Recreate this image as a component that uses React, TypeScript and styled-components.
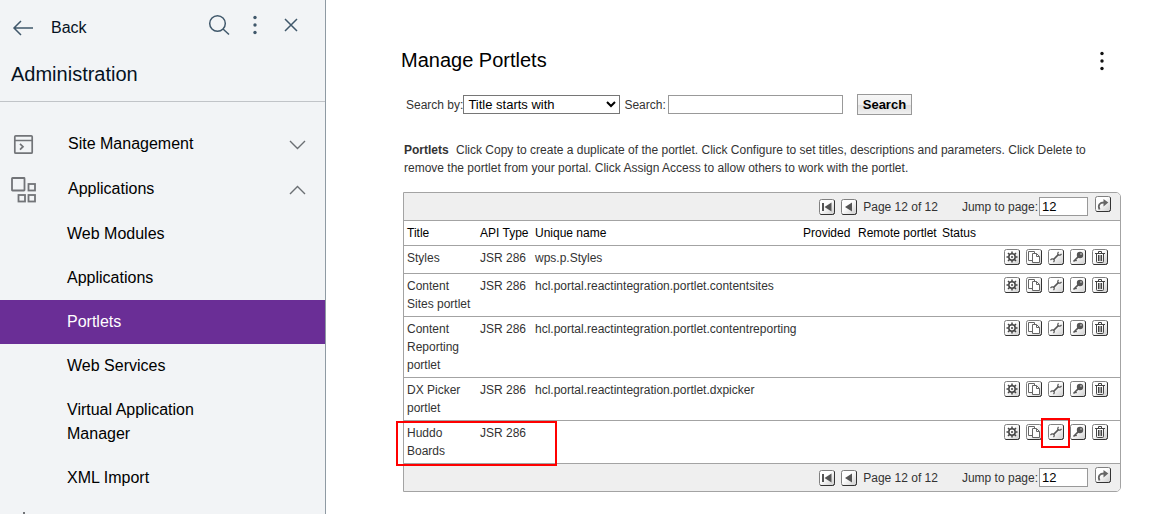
import React from "react";
import styled, { createGlobalStyle, css } from "styled-components";

const GlobalStyle = createGlobalStyle`
  *, *::before, *::after { box-sizing: border-box; }
  body {
    margin: 0;
    background: #fff;
    color: #333;
    font-family: "Liberation Sans", Arial, Helvetica, sans-serif;
    font-size: 12px;
    line-height: 18px;
  }
  button, input, select { font-family: inherit; margin: 0; }
`;

const Page = styled.div`
  display: flex;
  height: 100vh;
  overflow: hidden;
`;

/* ---------- side navigation ---------- */

const Sidebar = styled.aside`
  flex: 0 0 326px;
  background: #f2f4f6;
  border-right: 1px solid #8f9aa3;
  color: #000;
  font-size: 16px;
  line-height: 24px;
  overflow: hidden;
`;

const SidebarHeader = styled.header`
  height: 102px;
  border-bottom: 1px solid #c1c4c8;
`;

const SidebarTools = styled.div`
  display: flex;
  align-items: flex-start;
  padding: 14px 23px 0 12px;
`;

const PlainButton = styled.button`
  display: flex;
  align-items: center;
  padding: 0;
  border: 0;
  background: none;
  color: #40586b;
  cursor: pointer;
`;

const BackButton = styled(PlainButton)`
  gap: 17px;
  height: 28px;
  margin-right: auto;
  font-size: 16px;
`;

const BackLabel = styled.span`
  color: #05121f;
`;

const ToolGroup = styled.div`
  display: flex;
  gap: 14px;
`;

const SidebarTitle = styled.h2`
  margin: 20px 0 0 11px;
  color: #05121f;
  font-size: 20px;
  font-weight: 400;
  line-height: 24px;
`;

const Nav = styled.nav`
  padding-top: 20px;
`;

const NavList = styled.ul`
  margin: 0;
  padding: 0;
  list-style: none;
`;

const SectionButton = styled.button`
  display: flex;
  align-items: center;
  width: 100%;
  height: 45px;
  padding: 0 19px 2px 10px;
  border: 0;
  background: none;
  color: #000;
  font-size: 16px;
  line-height: 24px;
  text-align: left;
  cursor: pointer;
`;

const SectionIcon = styled.span`
  display: flex;
  width: 58px;
  padding-top: 2px;
  color: #727478;
`;

const SectionLabel = styled.span`
  flex: 1;
`;

const NavLink = styled.a<{ $active?: boolean }>`
  display: block;
  padding: 10px 100px 10px 67px;
  background: ${(p) => (p.$active ? "#6a2e96" : "transparent")};
  color: ${(p) => (p.$active ? "#fff" : "#000")};
  text-decoration: none;
`;

/* ---------- main area ---------- */

const Main = styled.main`
  flex: 1;
  min-width: 0;
  padding: 48px 39px 0 75px;
`;

const TitleBar = styled.div`
  display: flex;
  align-items: center;
  justify-content: space-between;
  padding-right: 8px;
`;

const MenuButton = styled(PlainButton)`
  padding-top: 2px;
  color: #111;
`;

const Title = styled.h1`
  margin: 0;
  color: #000;
  font-size: 20px;
  font-weight: 400;
  line-height: 24px;
`;

const SearchForm = styled.form`
  display: flex;
  align-items: center;
  margin-top: 22px;
  padding-left: 5px;
`;

const FilterSelect = styled.select`
  width: 157px;
  height: 19px;
  margin-right: 4px;
  padding: 0;
  border: 1px solid #767676;
  border-radius: 0;
  background-color: #fff;
  color: #000;
  font-size: 13px;
`;

const TextInput = styled.input<{ $width: number }>`
  width: ${(p) => p.$width}px;
  height: 19px;
  padding: 1px 2px;
  border: 1px solid #999;
  border-radius: 0;
  background: #fff;
  color: #000;
  font-size: 13px;
`;

const SearchLabel = styled.label`
  margin-right: 2px;
`;

const SearchButton = styled.button`
  height: 21px;
  margin-left: 14px;
  padding: 0 5px;
  border: 1px solid #999;
  background: linear-gradient(#f6f6f6 0%, #f0f0f0 50%, #dedede 52%, #f0f0f0 100%);
  color: #000;
  font-size: 13px;
  font-weight: 700;
  line-height: 18px;
`;

const Intro = styled.p`
  margin: 26px 0 0;
  padding: 0 3px;
`;

const IntroName = styled.strong`
  margin-right: 4px;
`;

const Panel = styled.section`
  margin: 15px 0 0 2px;
  border: 1px solid #a3a3a3;
  border-radius: 0 5px 5px 0;
`;

const PagerBar = styled.div<{ $bottom?: boolean }>`
  display: flex;
  align-items: center;
  justify-content: flex-end;
  height: 27px;
  padding-right: 9px;
  background: #efefef;
  border-radius: ${(p) => (p.$bottom ? "0 0 4px 0" : "0 4px 0 0")};
`;

const PagerButtons = styled.div`
  display: flex;
  gap: 6px;
  margin-right: 6px;
`;

const PageStatus = styled.span`
  margin-right: 24px;
`;

const JumpLabel = styled.label`
  margin-right: 1px;
`;

const GoSlot = styled.span`
  display: flex;
  align-self: flex-start;
  margin: 3px 0 0 7px;
`;

const DataTable = styled.table`
  width: 100%;
  border-collapse: collapse;
  table-layout: fixed;
  border-top: 1px solid #a3a3a3;
`;

const Col = styled.col<{ $width?: number }>`
  ${(p) => p.$width && css`width: ${p.$width}px;`}
`;

const HeadCell = styled.th`
  padding: 3px;
  border-bottom: 1px solid #a3a3a3;
  color: #000;
  font-weight: 400;
  text-align: left;
  white-space: nowrap;
`;

const Cell = styled.td`
  position: relative;
  height: 28px;
  padding: 3px;
  border-bottom: 1px solid #a3a3a3;
  vertical-align: top;
`;

const Actions = styled.div`
  display: flex;
  justify-content: flex-end;
  gap: 6px;
  padding-right: 9px;
`;

const TitleMark = styled.span`
  position: absolute;
  top: 0;
  left: -8px;
  width: 161px;
  height: 45px;
  border: 2px solid #f00;
  pointer-events: none;
`;

const IconButton = styled.button<{ $marked?: boolean }>`
  position: relative;
  display: flex;
  width: 16px;
  height: 16px;
  padding: 0;
  border: 0;
  background: none;
  ${(p) =>
    p.$marked &&
    css`
      &::after {
        content: "";
        position: absolute;
        z-index: 1;
        top: -6px;
        left: -7px;
        width: 29px;
        height: 30px;
        border: 2px solid #f00;
      }
    `}
`;

/* ---------- drawings ---------- */

const glyphs = {
  first: (
    <>
      <path d="M3 4h2v8H3z" fill="#555" />
      <path d="M12.500 3.500v9L5.500 8z" fill="#555" />
    </>
  ),
  previous: <path d="M11 3.500v9L4 8z" fill="#555" />,
  go: (
    <>
      <path d="M4.500 13.500C2.500 9 5 6.500 9 6.500" fill="none" stroke="#666" strokeWidth="1.800" />
      <path d="M8.500 3v7.500l4.800-4z" fill="#666" />
    </>
  ),
  settings: (
    <g fill="none" stroke="#444">
      <circle cx="8" cy="8" r="3.200" strokeWidth="1.500" />
      <path
        d="M8 2.500v2M8 11.500v2M2.500 8h2M11.500 8h2M4 4l1.500 1.500M10.500 10.500l1.500 1.500M12 4l-1.500 1.500M5.500 10.500L4 12"
        strokeWidth="1.500"
      />
      <circle cx="8" cy="8" r="1" fill="#444" stroke="none" />
    </g>
  ),
  copy: (
    <g stroke="#666" fill="#fff">
      <path d="M2.500 2.500h6v9h-6z" />
      <path d="M6.500 4.500h4l3 3v6h-7z" />
      <path d="M10.500 4.500v3h3" fill="none" />
    </g>
  ),
  configure: (
    <g stroke="#555" fill="none">
      <path d="M5.500 10.500l5-5" strokeWidth="1.700" />
      <path d="M10.500 2.800Q9 5 10.500 5.700Q12 7 13.500 4.800" strokeWidth="1.200" />
      <path d="M5.500 13.200Q7 11 5.500 10.300Q4 9 2.500 11.200" strokeWidth="1.200" />
    </g>
  ),
  access: (
    <>
      <circle cx="10" cy="6" r="3.200" fill="#555" />
      <path d="M8.500 7.500L3.500 12.500M5 10.500l1.500 1.500" stroke="#555" strokeWidth="1.700" fill="none" />
      <circle cx="11" cy="5" r=".8" fill="#ddd" />
    </>
  ),
  remove: (
    <g stroke="#444" fill="none">
      <path d="M3 4.500h10M6.500 4v-1.500h3v1.500" />
      <path d="M4.500 5v7.500q0 1 1 1h5q1 0 1-1V5M6.500 6v6M8 6v6M9.500 6v6" />
    </g>
  ),
};

type GlyphName = keyof typeof glyphs;

function ToolIcon({ name }: { name: GlyphName }) {
  return (
    <svg width="16" height="16" viewBox="0 0 16 16" aria-hidden="true">
      <defs>
        <linearGradient id="key-face" x1="0" y1="0" x2="1" y2="1">
          <stop offset="0.4" stopColor="#fff" />
          <stop offset="1" stopColor="#ccc" />
        </linearGradient>
      </defs>
      <rect x=".5" y=".5" width="15" height="15" rx="2" fill="url(#key-face)" stroke="#808080" />
      <path d="M1.500 15.500h12q2 0 2-2v-12" fill="none" stroke="#333" />
      {glyphs[name]}
    </svg>
  );
}

const Chevron = ({ up }: { up?: boolean }) => (
  <svg width="17" height="12" viewBox="0 0 17 12" fill="none" stroke="#6b6f73" strokeWidth="1.400" aria-hidden="true">
    <path d={up ? "M1 11l7.500-7.500L16 11" : "M1 3l7.500 7.500L16 3"} />
  </svg>
);

const BackArrow = () => (
  <svg width="22" height="16" viewBox="0 0 22 16" fill="none" stroke="#40586b" strokeWidth="1.500" aria-hidden="true">
    <path d="M21 8H2M9 1L2 8l7 7" />
  </svg>
);

const Magnifier = () => (
  <svg width="22" height="22" viewBox="0 0 22 22" fill="none" stroke="#40586b" strokeWidth="1.500" aria-hidden="true">
    <circle cx="9.500" cy="9.500" r="7.800" />
    <path d="M15 15l6 5.500" />
  </svg>
);

const Dots = () => (
  <svg width="22" height="22" viewBox="0 0 22 22" fill="currentColor" aria-hidden="true">
    <circle cx="11" cy="3.500" r="1.700" />
    <circle cx="11" cy="11" r="1.700" />
    <circle cx="11" cy="18.500" r="1.700" />
  </svg>
);

const Cross = () => (
  <svg width="22" height="22" viewBox="0 0 22 22" fill="none" stroke="#40586b" strokeWidth="1.500" aria-hidden="true">
    <path d="M5 5l12 12M17 5L5 17" />
  </svg>
);

const SiteIcon = () => (
  <svg width="28" height="28" viewBox="0 0 28 28" fill="none" stroke="currentColor" strokeWidth="1.700" aria-hidden="true">
    <rect x="4.800" y="4.800" width="17.400" height="17.400" rx="1" />
    <path d="M5 9.500h17M10 12.800l3 2.900-3 2.900" />
  </svg>
);

const AppsIcon = () => (
  <svg width="28" height="28" viewBox="0 0 28 28" fill="none" stroke="currentColor" strokeWidth="1.800" aria-hidden="true">
    <rect x="2" y="2" width="12.500" height="12.500" rx=".5" />
    <rect x="18.500" y="8" width="6.500" height="6.500" />
    <rect x="8.500" y="19" width="6.500" height="6.500" />
    <rect x="18.500" y="19" width="6.500" height="6.500" />
  </svg>
);

const GearIcon = () => (
  <svg width="28" height="28" viewBox="0 0 28 28" fill="none" stroke="currentColor" strokeWidth="2" aria-hidden="true">
    <path d="M14 3v6M14 19v6M3 14h6M19 14h6" />
    <circle cx="14" cy="14" r="5" />
  </svg>
);

/* ---------- content ---------- */

const links = ["Web Modules", "Applications", "Portlets", "Web Services", "Virtual Application Manager", "XML Import"];

const rows = [
  { title: "Styles", name: "wps.p.Styles" },
  { title: "Content Sites portlet", name: "hcl.portal.reactintegration.portlet.contentsites" },
  { title: "Content Reporting portlet", name: "hcl.portal.reactintegration.portlet.contentreporting" },
  { title: "DX Picker portlet", name: "hcl.portal.reactintegration.portlet.dxpicker" },
  { title: "Huddo Boards", name: "", marked: true },
];

const actions: { glyph: GlyphName; label: string }[] = [
  { glyph: "settings", label: "Manage" },
  { glyph: "copy", label: "Copy" },
  { glyph: "configure", label: "Configure" },
  { glyph: "access", label: "Assign Access" },
  { glyph: "remove", label: "Delete" },
];

function Pager({ id, bottom }: { id: string; bottom?: boolean }) {
  return (
    <PagerBar $bottom={bottom}>
      <PagerButtons>
        <IconButton type="button" aria-label="First page">
          <ToolIcon name="first" />
        </IconButton>
        <IconButton type="button" aria-label="Previous page">
          <ToolIcon name="previous" />
        </IconButton>
      </PagerButtons>
      <PageStatus>Page 12 of 12</PageStatus>
      <JumpLabel htmlFor={id}>Jump to page:</JumpLabel>
      <TextInput id={id} $width={49} defaultValue="12" />
      <GoSlot>
        <IconButton type="button" aria-label="Go to page">
          <ToolIcon name="go" />
        </IconButton>
      </GoSlot>
    </PagerBar>
  );
}

export default function App() {
  return (
    <>
      <GlobalStyle />
      <Page>
        <Sidebar>
          <SidebarHeader>
            <SidebarTools>
              <BackButton type="button">
                <BackArrow />
                <BackLabel>Back</BackLabel>
              </BackButton>
              <ToolGroup>
                <PlainButton type="button" aria-label="Search">
                  <Magnifier />
                </PlainButton>
                <PlainButton type="button" aria-label="More options">
                  <Dots />
                </PlainButton>
                <PlainButton type="button" aria-label="Close">
                  <Cross />
                </PlainButton>
              </ToolGroup>
            </SidebarTools>
            <SidebarTitle>Administration</SidebarTitle>
          </SidebarHeader>
          <Nav aria-label="Administration">
            <SectionButton type="button" aria-expanded={false}>
              <SectionIcon>
                <SiteIcon />
              </SectionIcon>
              <SectionLabel>Site Management</SectionLabel>
              <Chevron />
            </SectionButton>
            <SectionButton type="button" aria-expanded={true}>
              <SectionIcon>
                <AppsIcon />
              </SectionIcon>
              <SectionLabel>Applications</SectionLabel>
              <Chevron up />
            </SectionButton>
            <NavList>
              {links.map((text) => (
                <li key={text}>
                  <NavLink href="#" $active={text === "Portlets"}>
                    {text}
                  </NavLink>
                </li>
              ))}
            </NavList>
            <SectionButton type="button" aria-label="Settings">
              <SectionIcon>
                <GearIcon />
              </SectionIcon>
            </SectionButton>
          </Nav>
        </Sidebar>

        <Main>
          <TitleBar>
            <Title>Manage Portlets</Title>
            <MenuButton type="button" aria-label="Portlet menu">
              <Dots />
            </MenuButton>
          </TitleBar>

          <SearchForm onSubmit={(e) => e.preventDefault()}>
            <label htmlFor="search-by">Search by:</label>
            <FilterSelect id="search-by">
              <option>Title starts with</option>
              <option>Title contains</option>
            </FilterSelect>
            <SearchLabel htmlFor="search-text">Search:</SearchLabel>
            <TextInput id="search-text" $width={175} />
            <SearchButton type="submit">Search</SearchButton>
          </SearchForm>

          <Intro>
            <IntroName>Portlets</IntroName> Click Copy to create a duplicate of the portlet. Click Configure to set
            titles, descriptions and parameters. Click Delete to remove the portlet from your portal. Click Assign
            Access to allow others to work with the portlet.
          </Intro>

          <Panel>
            <Pager id="jump-top" />
            <DataTable>
              <colgroup>
                <Col $width={73} />
                <Col $width={55} />
                <Col $width={268} />
                <Col $width={55} />
                <Col $width={84} />
                <Col $width={50} />
                <Col />
              </colgroup>
              <thead>
                <tr>
                  <HeadCell>Title</HeadCell>
                  <HeadCell>API Type</HeadCell>
                  <HeadCell>Unique name</HeadCell>
                  <HeadCell>Provided</HeadCell>
                  <HeadCell>Remote portlet</HeadCell>
                  <HeadCell>Status</HeadCell>
                  <HeadCell aria-label="Actions" />
                </tr>
              </thead>
              <tbody>
                {rows.map((row) => (
                  <tr key={row.title}>
                    <Cell>
                      {row.title}
                      {row.marked && <TitleMark />}
                    </Cell>
                    <Cell>JSR 286</Cell>
                    <Cell>{row.name}</Cell>
                    <Cell />
                    <Cell />
                    <Cell />
                    <Cell>
                      <Actions>
                        {actions.map((a) => (
                          <IconButton
                            key={a.glyph}
                            type="button"
                            aria-label={`${a.label} ${row.title}`}
                            $marked={row.marked && a.glyph === "configure"}
                          >
                            <ToolIcon name={a.glyph} />
                          </IconButton>
                        ))}
                      </Actions>
                    </Cell>
                  </tr>
                ))}
              </tbody>
            </DataTable>
            <Pager id="jump-bottom" bottom />
          </Panel>
        </Main>
      </Page>
    </>
  );
}
